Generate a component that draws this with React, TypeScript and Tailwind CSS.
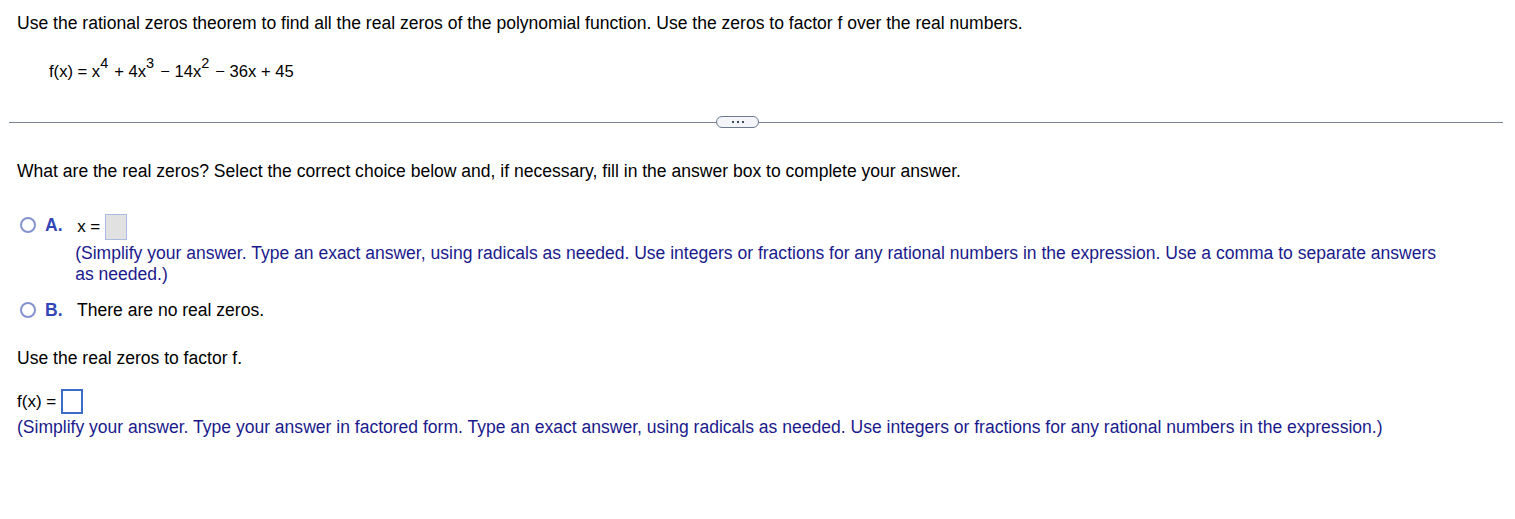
import React from "react";

const blue = "text-[#1a1a8c]";

function Radio() {
  return (
    <span className="inline-block w-[16px] h-[16px] rounded-full border-2 border-[#8593cf] bg-white shrink-0" />
  );
}

export default function App() {
  return (
    <div
      className="min-h-[519px] bg-white text-black text-[17.55px]"
      style={{ fontFamily: '"Liberation Sans", Arial, sans-serif' }}
    >
      <div className="pl-[17px] pt-[12px]">
        <p className="leading-[22px]">
          Use the rational zeros theorem to find all the real zeros of the polynomial function. Use the zeros to factor f over the real numbers.
        </p>
        <div className="ml-[32px] mt-[27px] text-[16.6px] leading-[22px] whitespace-nowrap">
          f(x) = x<sup className="text-[14.5px] top-[-9px] mr-[6px]">4</sup>
          + 4x<sup className="text-[14.5px] top-[-9px] mr-[6px]">3</sup>
          − 14x<sup className="text-[14.5px] top-[-9px] mr-[6px]">2</sup>
          − 36x + 45
        </div>
      </div>

      <div className="flex items-center mt-[33px] ml-[9px] mr-[12px]">
        <div className="w-[707px] h-px bg-[#7b8591]" />
        <div className="w-[43px] h-[12px] rounded-full border border-[#6c7a8c] bg-[#f3f5f8] flex items-center justify-center gap-[3px]">
          <span className="w-[2px] h-[2px] bg-[#3d4a5c]" />
          <span className="w-[2px] h-[2px] bg-[#3d4a5c]" />
          <span className="w-[2px] h-[2px] bg-[#3d4a5c]" />
        </div>
        <div className="flex-1 h-px bg-[#7b8591]" />
      </div>

      <div className="pl-[17px]">
        <p className="mt-[32px] leading-[22px]">
          What are the real zeros? Select the correct choice below and, if necessary, fill in the answer box to complete your answer.
        </p>

        <div className="mt-[32px] flex items-start">
          <div className="mt-[3px] ml-[3px] flex"><Radio /></div>
          <span className="ml-[9px] leading-[22px] font-bold text-[#3346b8] w-[32px]">A.</span>
          <div>
            <div className="flex items-center">
              <span className="text-[17px] ml-[2px]">x =</span>
              <span className="ml-[5px] w-[22px] h-[26px] bg-[#e1e1e1] border border-[#a9bbe0]" />
            </div>
            <p className={`${blue} leading-[21px] mt-[3px] pr-[70px]`}>
              (Simplify your answer. Type an exact answer, using radicals as needed. Use integers or fractions for any rational numbers in the expression. Use a comma to separate answers as needed.)
            </p>
          </div>
        </div>

        <div className="mt-[14px] flex items-center leading-[22px]">
          <div className="ml-[3px] flex"><Radio /></div>
          <span className="ml-[9px] font-bold text-[#3346b8] w-[32px]">B.</span>
          <span>There are no real zeros.</span>
        </div>

        <p className="mt-[26px] leading-[22px]">Use the real zeros to factor f.</p>

        <div className="mt-[20px] flex items-center">
          <span className="text-[17px]">f(x) =</span>
          <span className="ml-[5px] w-[22px] h-[25px] bg-white border-2 border-[#3a6cc8]" />
        </div>
        <p className={`${blue} leading-[22px] mt-[1px]`}>
          (Simplify your answer. Type your answer in factored form. Type an exact answer, using radicals as needed. Use integers or fractions for any rational numbers in the expression.)
        </p>
      </div>
    </div>
  );
}
